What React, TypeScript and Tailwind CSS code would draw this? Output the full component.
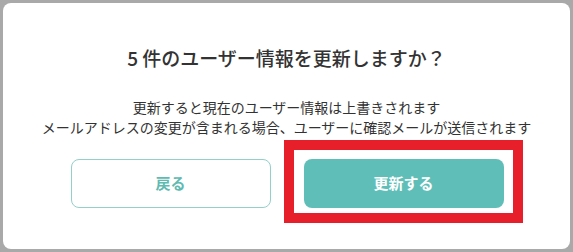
import React from 'react';

const App = () => {
  return (
    <div className="w-[573px] h-[252px] bg-[#a9a9a9] p-[3px] font-['Noto_Sans_CJK_JP','Noto_Sans',sans-serif]">
      <div className="w-[567px] h-[246px] bg-white rounded-lg flex flex-col items-center pt-[41px]">
        {/* Title */}
        <h2 className="text-[19px] leading-7 font-medium text-[#333333]">
          5 件のユーザー情報を更新しますか？
        </h2>

        {/* Description */}
        <div className="mt-[25px] text-[14px] leading-5 text-[#333333] text-center">
          <p>更新すると現在のユーザー情報は上書きされます</p>
          <p>メールアドレスの変更が含まれる場合、ユーザーに確認メールが送信されます</p>
        </div>

        {/* Actions */}
        <div className="mt-[22px] flex gap-[33px] pl-[1px]">
          <button className="w-[200px] h-[49px] rounded-lg border border-[#93d0cb] bg-white text-[15px] font-bold text-[#5fbab2]">
            戻る
          </button>
          <div className="relative">
            <button className="w-[200px] h-[49px] rounded-lg bg-[#5fbfb8] text-[15px] font-bold text-white">
              更新する
            </button>
            {/* Highlight frame */}
            <div className="absolute -left-[20px] -right-[19px] -top-[19px] -bottom-[15px] border-[10px] border-[#e61f2a] pointer-events-none"></div>
          </div>
        </div>
      </div>
    </div>
  );
};

export default App;
